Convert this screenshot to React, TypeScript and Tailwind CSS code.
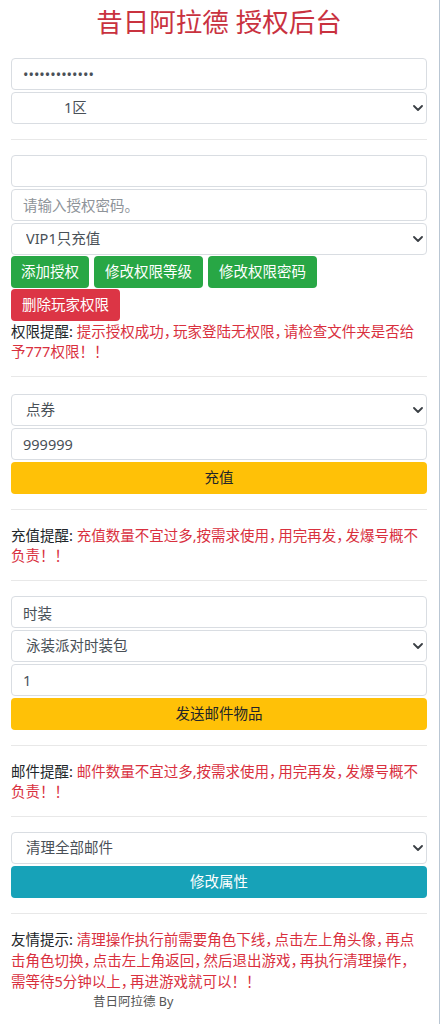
import React from "react";

const Chevron = () => (
  <svg
    className="pointer-events-none absolute right-[4px] top-1/2 -translate-y-1/2"
    width="10"
    height="6"
    viewBox="0 0 10 6"
    fill="none"
  >
    <path d="M1 1L5 5L9 1" stroke="#3a3f44" strokeWidth="1.8" strokeLinecap="round" strokeLinejoin="round" />
  </svg>
);

function Select({ value, wide }: { value: string; wide?: boolean }) {
  return (
    <div className="relative w-full">
      <select
        defaultValue={value}
        className={
          wide
            ? "block h-[32px] w-full appearance-none rounded-[4px] border border-[#d9dde2] bg-white pl-[52px] pr-[24px] text-[14.5px] text-[#495057] outline-none"
            : "block h-[32px] w-full appearance-none rounded-[4px] border border-[#d9dde2] bg-white pl-[14px] pr-[24px] text-[14.5px] text-[#495057] outline-none"
        }
      >
        <option>{value}</option>
      </select>
      <Chevron />
    </div>
  );
}

function Input({ value, placeholder, type }: { value?: string; placeholder?: string; type?: string }) {
  return (
    <input
      readOnly
      type={type || "text"}
      defaultValue={value}
      placeholder={placeholder}
      className="block h-[32px] w-full rounded-[4px] border border-[#d9dde2] bg-white px-[11px] text-[14.5px] text-[#495057] outline-none placeholder:text-[#8e9399]"
    />
  );
}

const Hr = ({ extra }: { extra?: boolean }) => (
  <div className={extra ? "mt-[15px] mb-[17px] h-px w-full bg-[#e8e8e8]" : "my-[15px] h-px w-full bg-[#e8e8e8]"} />
);

const Bang = () => <span className="[font-feature-settings:normal]">！！</span>;
const C = () => <span className="mr-[2px]">，</span>;

export default function App() {
  return (
    <div className="min-h-[1024px] w-[440px] border-r border-[#b9c6d3] bg-white font-['Noto_Sans','Noto_Sans_CJK_SC',sans-serif]">
      <div className="w-[427px] pl-[11px] pt-[4px]">
        <h1 className="mb-[18px] text-center text-[26.5px] font-normal leading-[36px] text-[#c9323f]">
          昔日阿拉德 授权后台
        </h1>

        <div className="flex flex-col gap-[2px]">
          <Input type="password" value="1234567890123" />
          <Select value="1区" wide />
        </div>

        <Hr />

        <div className="flex flex-col gap-[2px]">
          <Input value="" />
          <Input placeholder="请输入授权密码。" />
          <Select value="VIP1只充值" />
        </div>
        <div className="mt-[1px] flex gap-[5px]">
          <button className="h-[32px] rounded-[4px] bg-[#28a745] px-[10px] text-[14.5px] text-white">添加授权</button>
          <button className="h-[32px] rounded-[4px] bg-[#28a745] px-[11px] text-[14.5px] text-white">修改权限等级</button>
          <button className="h-[32px] rounded-[4px] bg-[#28a745] px-[11px] text-[14.5px] text-white">修改权限密码</button>
        </div>
        <div className="mt-[1px] flex">
          <button className="h-[32px] rounded-[4px] bg-[#dc3545] px-[11px] text-[14.5px] text-white">删除玩家权限</button>
        </div>
        <p className="whitespace-nowrap text-[14.5px] leading-[20px] text-[#212529] [font-feature-settings:'halt']">
          权限提醒: <span className="text-[#d9303e]">提示授权成功<C />玩家登陆无权限<C />请检查文件夹是否给<br />予777权限<Bang /></span>
        </p>

        <Hr extra />

        <div className="flex flex-col gap-[2px]">
          <Select value="点券" />
          <Input value="999999" />
          <button className="h-[32px] w-full rounded-[4px] bg-[#ffc107] text-[14.5px] text-[#212529]">充值</button>
        </div>

        <Hr />

        <p className="whitespace-nowrap text-[14.5px] leading-[20px] text-[#212529] [font-feature-settings:'halt']">
          充值提醒: <span className="text-[#d9303e]">充值数量不宜过多,按需求使用<C />用完再发<C />发爆号概不<br />负责<Bang /></span>
        </p>

        <Hr />

        <div className="flex flex-col gap-[2px]">
          <Input value="时装" />
          <Select value="泳装派对时装包" />
          <Input value="1" />
          <button className="h-[32px] w-full rounded-[4px] bg-[#ffc107] text-[14.5px] text-[#212529]">发送邮件物品</button>
        </div>

        <Hr />

        <p className="whitespace-nowrap text-[14.5px] leading-[20px] text-[#212529] [font-feature-settings:'halt']">
          邮件提醒: <span className="text-[#d9303e]">邮件数量不宜过多,按需求使用<C />用完再发<C />发爆号概不<br />负责<Bang /></span>
        </p>

        <Hr />

        <div className="flex flex-col gap-[2px]">
          <Select value="清理全部邮件" />
          <button className="h-[32px] w-full rounded-[4px] bg-[#17a2b8] text-[14.5px] text-white">修改属性</button>
        </div>

        <Hr />

        <p className="whitespace-nowrap text-[14.5px] leading-[21px] text-[#212529] [font-feature-settings:'halt']">
          友情提示: <span className="text-[#d9303e]">清理操作执行前需要角色下线<C />点击左上角头像<C />再点<br />击角色切换<C />点击左上角返回<C />然后退出游戏<C />再执行清理操作，<br />需等待5分钟以上<C />再进游戏就可以<Bang /></span>
        </p>
        <div className="pl-[82px] text-[12.5px] leading-[20px] text-[#555]">昔日阿拉德 By</div>
      </div>
    </div>
  );
}
